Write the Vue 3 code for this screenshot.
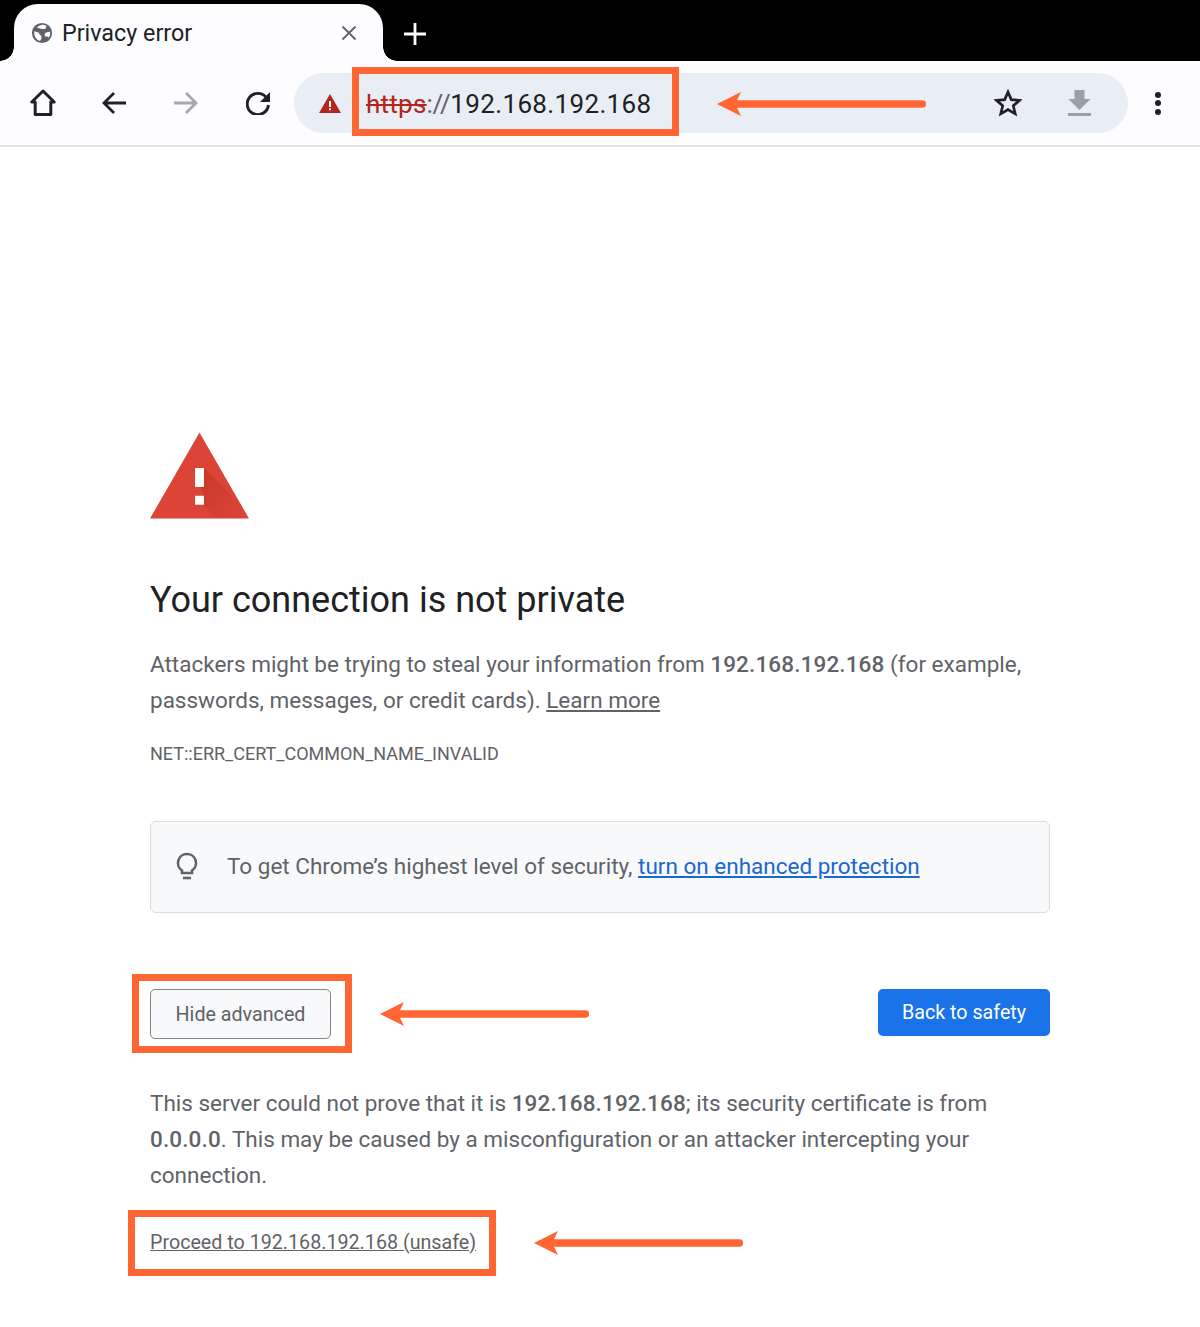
<template>
  <div class="browser">
    <div class="tab-strip">
      <div class="tab">
        <svg class="globe" viewBox="0 0 24 24"><path fill="#5f6368" d="M12 1a11 11 0 1 0 0 22 11 11 0 0 0 0-22zM3.600 10.200l4.600 1.200 1.500 2.600c.3.500.9.700 1.400.8l.3 3.400-1.600 2.400A8.900 8.900 0 0 1 3.600 10.200zM19.400 17.200c-.5-.8-1.400-1.300-2.400-1.300h-1.600l-.7-2.600c.6-.9 1.500-1.600 2.600-2l3.500-.6a9 9 0 0 1-1.400 6.500zM15.500 7.500c-1.800.4-3.500.2-5.400-.4L8 6.500l-1.700-.6A9 9 0 0 1 17 4.400l-1.500 3.100z"/></svg>
        <span class="tab-title">Privacy error</span>
        <svg class="tab-close" viewBox="0 0 16 16"><path d="M1.500 1.500l13 13M14.500 1.500l-13 13" stroke="#5f6368" stroke-width="1.900" fill="none"/></svg>
      </div>
      <svg class="new-tab" viewBox="0 0 24 24"><path d="M12 1v22M1 12h22" stroke="#fff" stroke-width="2.800" fill="none"/></svg>
    </div>

    <div class="toolbar">
      <svg class="tool-icon home" viewBox="0 0 26 28"><path d="M13 2L1.800 13h3.400v12.600h15.600V13h3.400z" fill="none" stroke="#202124" stroke-width="3" stroke-linejoin="round"/></svg>
      <svg class="tool-icon" viewBox="0 0 24 24"><path d="M24 12H3M12 2L2 12l10 10" fill="none" stroke="#202124" stroke-width="2.800"/></svg>
      <svg class="tool-icon" viewBox="0 0 24 24"><path d="M0 12h21M12 2l10 10-10 10" fill="none" stroke="#a4a7ab" stroke-width="2.800"/></svg>
      <svg class="tool-icon" viewBox="0 0 24 24"><path d="M20.400 6.700A10.600 10.600 0 1 0 22.400 14" fill="none" stroke="#202124" stroke-width="2.900"/><path d="M24 1v10H14z" fill="#202124"/></svg>

      <div class="omnibox">
        <svg class="warn" viewBox="0 0 22 19"><path fill="#b3261e" d="M11 0l11 19H0z"/><path fill="#fff" d="M10 7h2v6h-2zM10 14.300h2v2h-2z"/></svg>
        <div class="url"><span class="scheme">https</span><span class="slashes">://</span><span class="host">192.168.192.168</span></div>
        <svg class="star" viewBox="0 0 28 28"><path d="M14 3l3.300 7.600 8.200.7-6.200 5.400 1.900 8.100L14 20.500l-7.200 4.300 1.900-8.100-6.200-5.400 8.200-.7z" fill="none" stroke="#202124" stroke-width="2.700"/></svg>
        <svg class="download" viewBox="0 0 23 26"><path fill="#9aa0a6" d="M6.500 0h10v9h6L11.500 20 .5 9h6zM0 23h23v3H0z"/></svg>
      </div>

      <div class="menu-dots"><i></i><i></i><i></i></div>
    </div>

    <main class="interstitial">
      <svg class="danger" viewBox="0 0 100 87">
        <defs>
          <linearGradient id="shade" x1="0.1" y1="0.1" x2="0.9" y2="0.9">
            <stop offset="0" stop-color="#a52714" stop-opacity="0.35"/>
            <stop offset="1" stop-color="#a52714" stop-opacity="0"/>
          </linearGradient>
        </defs>
        <path fill="#db4437" d="M50 0l50 87H0z"/>
        <path fill="url(#shade)" d="M54.500 36l36.500 36 8.500 15H66L54.500 73V64l-4-9h4z"/>
        <path fill="#fff" d="M45.500 36h9v19h-9zM45.500 64h9v9h-9z"/>
      </svg>
      <h1>Your connection is not private</h1>
      <p class="summary">Attackers might be trying to steal your information from <b>192.168.192.168</b> (for example, passwords, messages, or credit cards). <a class="plain-link">Learn more</a></p>
      <div class="error-code">NET::ERR_CERT_COMMON_NAME_INVALID</div>

      <div class="enhanced">
        <svg class="bulb" viewBox="0 0 22 28"><path d="M11 2a9 9 0 0 0-5 16.500V21h10v-2.500A9 9 0 0 0 11 2z" fill="none" stroke="#5f6368" stroke-width="2.600"/><path d="M7 26h8" stroke="#5f6368" stroke-width="2.600"/></svg>
        <span>To get Chrome’s highest level of security, <a class="blue-link">turn on enhanced protection</a></span>
      </div>

      <div class="buttons">
        <button class="btn-advanced">Hide advanced</button>
        <button class="btn-safety">Back to safety</button>
      </div>

      <p class="details">This server could not prove that it is <b>192.168.192.168</b>; its security certificate is from <b>0.0.0.0</b>. This may be caused by a misconfiguration or an attacker intercepting your connection.</p>
      <a class="proceed">Proceed to 192.168.192.168 (unsafe)</a>
    </main>

    <!-- tutorial markup drawn on top of the screenshot -->
    <div class="mark box-url"></div>
    <div class="mark box-hide"></div>
    <div class="mark box-proceed"></div>
    <svg v-for="a in arrows" :key="a" class="arrow" :class="a" viewBox="0 0 209 24">
      <path fill="#ff6633" d="M0 12L24 0l-4 8.300h185.500a3.700 3.700 0 0 1 0 7.400H20l4 8.300z"/>
    </svg>
  </div>
</template>

<script setup>
const arrows = ['arrow-url', 'arrow-hide', 'arrow-proceed']
</script>

<style>
body {
  background: #fff;
}
</style>

<style scoped>
.browser {
  position: relative;
  width: 1200px;
  height: 1327px;
  overflow: hidden;
  font-family: Roboto, "Liberation Sans", sans-serif;
  color: #5f6368;
}

/* tab strip */
.tab-strip {
  display: flex;
  align-items: flex-end;
  height: 61px;
  background: #000;
  padding-left: 14px;
}
.tab {
  position: relative;
  display: flex;
  align-items: center;
  width: 369px;
  height: 57px;
  box-sizing: border-box;
  padding: 0 26px 0 17px;
  background: #fdfdff;
  border-radius: 24px 24px 0 0;
}
.tab::before,
.tab::after {
  content: "";
  position: absolute;
  bottom: 0;
  width: 14px;
  height: 14px;
}
.tab::before {
  left: -14px;
  background: radial-gradient(circle at 0 0, transparent 13.500px, #fdfdff 14px);
}
.tab::after {
  right: -14px;
  background: radial-gradient(circle at 100% 0, transparent 13.500px, #fdfdff 14px);
}
.globe {
  width: 22px;
  height: 22px;
  margin-right: 9px;
}
.tab-title {
  flex: 1;
  font-size: 23.300px;
  color: #202124;
}
.tab-close {
  width: 16px;
  height: 16px;
}
.new-tab {
  width: 24px;
  height: 24px;
  margin: 0 0 15px 20px;
}

/* toolbar */
.toolbar {
  display: flex;
  align-items: center;
  height: 84px;
  padding: 0 39px 0 30px;
  background: #fdfdff;
  border-bottom: 2px solid #dfe2e6;
}
.tool-icon {
  width: 24px;
  height: 24px;
  margin-right: 48px;
  flex: none;
}
.tool-icon.home {
  width: 26px;
  height: 28px;
  margin-right: 46px;
}
.omnibox {
  display: flex;
  align-items: center;
  flex: 1;
  height: 60px;
  margin-left: -24px;
  padding: 0 37px 0 25px;
  border-radius: 30px;
  background: #e8eef4;
}
.warn {
  width: 22px;
  height: 19px;
  margin-right: 25px;
}
.url {
  flex: 1;
  padding-top: 2px;
  font-size: 26px;
  letter-spacing: 0.25px;
  color: #202124;
}
.scheme {
  color: #b3261e;
  text-decoration: line-through;
}
.slashes {
  color: #5f6368;
  letter-spacing: -0.4px;
}
.host {
  letter-spacing: 0.35px;
}
.star {
  width: 28px;
  height: 28px;
  margin-right: 46px;
}
.download {
  width: 23px;
  height: 26px;
}
.menu-dots {
  display: flex;
  flex-direction: column;
  gap: 2.500px;
  margin-left: 27px;
}
.menu-dots i {
  width: 6px;
  height: 6px;
  border-radius: 50%;
  background: #202124;
}

/* page content */
.interstitial {
  width: 900px;
  margin-left: 150px;
  padding-top: 285px;
}
.danger {
  display: block;
  width: 99px;
  height: 87px;
}
h1 {
  margin: 58px 0 0;
  font-size: 36px;
  font-weight: 400;
  line-height: 46px;
  color: #202124;
}
.summary,
.details {
  margin: 0;
  font-size: 22.500px;
  line-height: 36px;
  color: #5f6368;
}
.summary {
  margin-top: 23px;
}
b {
  font-weight: 500;
  letter-spacing: 0.13px;
}
.plain-link {
  color: #5f6368;
  text-decoration: underline;
}
.error-code {
  margin-top: 23px;
  font-size: 18px;
  line-height: 26px;
}
.enhanced {
  display: flex;
  align-items: center;
  height: 92px;
  box-sizing: border-box;
  margin-top: 54px;
  padding: 0 0 2px 25px;
  border: 1px solid #dadce0;
  border-radius: 6px;
  background: #f8f9fa;
  font-size: 22.500px;
}
.bulb {
  width: 22px;
  height: 28px;
  margin-right: 29px;
}
.blue-link {
  color: #1967d2;
  text-decoration: underline;
}
.buttons {
  display: flex;
  justify-content: space-between;
  align-items: flex-start;
  margin-top: 76px;
}
button {
  font-family: inherit;
  font-size: 19.700px;
}
.btn-advanced {
  width: 181px;
  height: 50px;
  border: 1px solid #80868b;
  border-radius: 5px;
  background: #f8f9fa;
  color: #5f6368;
}
.btn-safety {
  width: 172px;
  height: 47px;
  border: none;
  border-radius: 5px;
  background: #1a73e8;
  color: #fff;
}
.details {
  margin-top: 46px;
}
.proceed {
  display: block;
  margin-top: 37px;
  font-size: 19.700px;
  line-height: 26px;
  text-decoration: underline;
}

/* annotations */
.mark {
  position: absolute;
  box-sizing: border-box;
  border: 7px solid #ff6633;
}
.box-url {
  left: 352px;
  top: 67px;
  width: 327px;
  height: 69px;
}
.box-hide {
  left: 132px;
  top: 974px;
  width: 220px;
  height: 79px;
}
.box-proceed {
  left: 128px;
  top: 1210px;
  width: 368px;
  height: 66px;
}
.arrow {
  position: absolute;
  width: 209px;
  height: 24px;
}
.arrow-url {
  left: 717px;
  top: 92px;
}
.arrow-hide {
  left: 380px;
  top: 1002px;
}
.arrow-proceed {
  left: 534px;
  top: 1231px;
}
</style>
